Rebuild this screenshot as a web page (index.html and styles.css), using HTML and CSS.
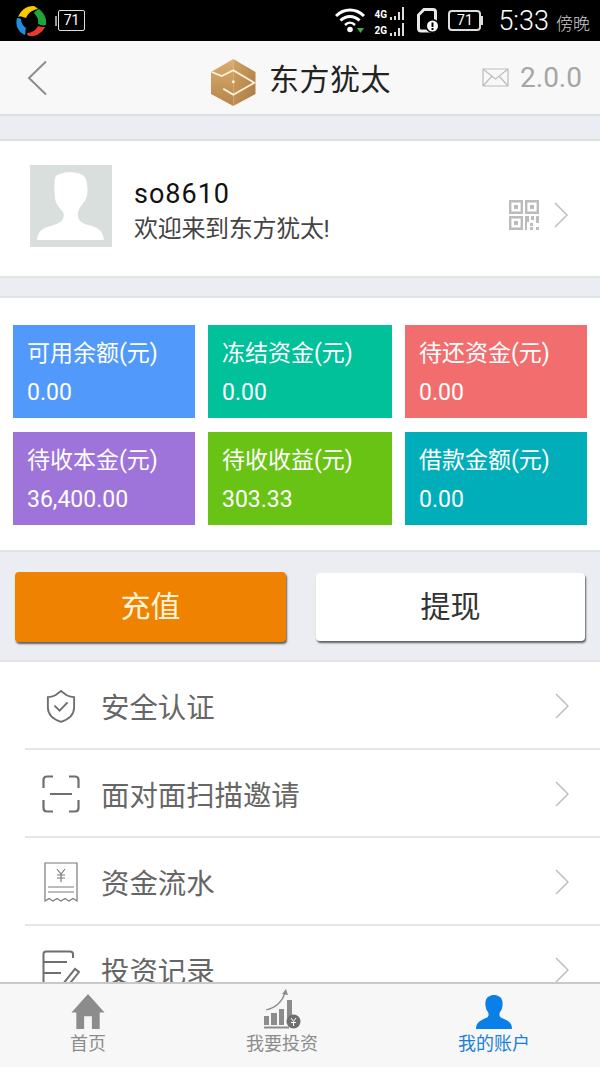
FILE: index.html
```html
<!DOCTYPE html>
<html lang="zh-CN">
<head>
	<meta charset="UTF-8">
	<title>东方犹太</title>
	<link rel="stylesheet" href="styles.css">
</head>
<body>
	<div class="statusbar">
		<div class="status-left">
			<svg width="32" height="32" viewBox="0 0 32 32">
				<path d="M3 12C6 5 11 1 18 1C20 1 22 3 23 4C17 5 13 8 11 13C8 12 5 11 3 12Z" fill="#f5c800"/>
				<path d="M24 4C29 8 32 13 31 20C28 21 26 20 23 19C24 15 22 11 19 8C20 6 22 5 24 4Z" fill="#1fa53c"/>
				<path d="M30 22C27 28 21 32 14 31C12 30 12 29 12 28C17 28 21 25 23 21C25 22 28 22 30 22Z" fill="#e8392f"/>
				<path d="M2 13C0 20 3 27 10 30C11 28 10 25 11 23C8 21 6 18 6 14C5 13 3 13 2 13Z" fill="#1f8fe0"/>
			</svg>
			<div class="mini-batt"><div class="mini-tip"></div><div class="mini-box">71</div></div>
		</div>
		<div class="status-right">
			<svg width="30" height="25" viewBox="0 0 30 25">
				<path d="M1 8C9 0 21 0 29 8" fill="none" stroke="#fff" stroke-width="3"/>
				<path d="M5.500 12.500C11 7 19 7 24.500 12.500" fill="none" stroke="#fff" stroke-width="3"/>
				<path d="M10 17C13 14 17 14 20 17" fill="none" stroke="#fff" stroke-width="2.500"/>
				<circle cx="15" cy="21.500" r="2.800" fill="#fff"/>
				<path d="M22 20H29L25.500 25Z" fill="#3fae49"/>
			</svg>
			<div class="signal">
				<div class="signal-row"><span>4G</span><i class="b1"></i><i class="b2"></i><i class="b3"></i><i class="b4"></i></div>
				<div class="signal-row"><span>2G</span><i class="b1"></i><i class="b2"></i><i class="b3"></i><i class="b4"></i></div>
			</div>
			<svg width="22" height="25" viewBox="0 0 22 25">
				<path d="M7 1.500H16Q18.500 1.500 18.500 4V20Q18.500 23 16 23H4Q1.500 23 1.500 20V7Z" fill="none" stroke="#e8e8e8" stroke-width="3"/>
				<circle cx="15.500" cy="18" r="7" fill="#000"/>
				<circle cx="15.500" cy="18" r="5.500" fill="#fff"/>
				<rect x="14.500" y="14.500" width="2" height="4.500" fill="#000"/>
				<rect x="14.500" y="20" width="2" height="2" fill="#000"/>
			</svg>
			<div class="batt"><div class="batt-box">71</div><div class="batt-tip"></div></div>
			<div class="clock">5:33<span>傍晚</span></div>
		</div>
	</div>

	<div class="topbar">
		<svg class="back" width="22" height="36" viewBox="0 0 22 36"><path d="M20 1.500L3 18L20 34.500" fill="none" stroke="#8d8d8d" stroke-width="2"/></svg>
		<div class="brand">
			<svg width="45" height="47" viewBox="0 0 45 47">
				<defs>
					<linearGradient id="gold" x1="0" y1="0" x2="0" y2="1">
						<stop offset="0" stop-color="#dcae70"/>
						<stop offset="1" stop-color="#b5854c"/>
					</linearGradient>
					<linearGradient id="goldDark" x1="0" y1="0" x2="1" y2="1">
						<stop offset="0" stop-color="#d2a262"/>
						<stop offset="1" stop-color="#a97a42"/>
					</linearGradient>
				</defs>
				<path d="M22.300 0L0 13V35L22.300 47Z" fill="url(#gold)"/>
				<path d="M22.300 0L44.500 13V35L22.300 47Z" fill="url(#goldDark)"/>
				<path d="M.7 13L10.700 17L22.300 11.300L43.300 23.700L22.300 35.700L12.300 29.700" fill="none" stroke="#fff3dc" stroke-width="1.800"/>
				<circle cx="22.300" cy="22.800" r="1.500" fill="#fff3dc"/>
			</svg>
			<div class="brand-name">东方犹太</div>
		</div>
		<div class="top-right">
			<svg width="27" height="19" viewBox="0 0 27 19"><path d="M1 1H26V18H1ZM1 1L13.500 11L26 1M1 18L10 8M26 18L17 8" fill="none" stroke="#bdbdbd" stroke-width="1.200"/></svg>
			<span>2.0.0</span>
		</div>
	</div>

	<div class="main">
		<div class="profile">
			<div class="avatar">
				<svg width="82" height="82" viewBox="0 0 82 82">
					<path d="M7 75C8 66 12 63 24 60C33 57 35 52 33 47C29 42 25 38 25 32C24 22 24 14 26 11C32 6 52 5 56 14C58 22 58 28 56 34C54 38 49 42 48 47C47 54 50 58 58 60C68 62 73 66 74 75Z" fill="#fff"/>
				</svg>
			</div>
			<div class="profile-text">
				<div class="username">so8610</div>
				<div class="welcome">欢迎来到东方犹太!</div>
			</div>
			<svg class="qr" width="30" height="30" viewBox="0 0 30 30">
				<path d="M1.200 1.200H12.800V12.800H1.200ZM17.200 1.200H28.800V12.800H17.200ZM1.200 17.200H12.800V28.800H1.200Z" fill="none" stroke="#bcbcbc" stroke-width="2.400"/>
				<path d="M5 5H9V9H5ZM21 5H25V9H21ZM5 21H9V25H5Z" fill="#bcbcbc"/>
				<path d="M16 16H20V22H18V30H16ZM22 16H25V20H22ZM27 16H30V23H27ZM21 23H24V26H21ZM21 27H24V30H21ZM27 27H30V30H27Z" fill="#bcbcbc"/>
			</svg>
			<svg class="chev" width="14" height="26" viewBox="0 0 14 26"><path d="M1 1L13 13L1 25" fill="none" stroke="#bdbdbd" stroke-width="1.500"/></svg>
		</div>

		<div class="tiles">
			<div class="tile t-blue"><div class="tile-label">可用余额(元)</div><div class="tile-value">0.00</div></div>
			<div class="tile t-green"><div class="tile-label">冻结资金(元)</div><div class="tile-value">0.00</div></div>
			<div class="tile t-red"><div class="tile-label">待还资金(元)</div><div class="tile-value">0.00</div></div>
			<div class="tile t-purple"><div class="tile-label">待收本金(元)</div><div class="tile-value">36,400.00</div></div>
			<div class="tile t-lime"><div class="tile-label">待收收益(元)</div><div class="tile-value">303.33</div></div>
			<div class="tile t-teal"><div class="tile-label">借款金额(元)</div><div class="tile-value">0.00</div></div>
		</div>

		<div class="actions">
			<div class="btn btn-orange">充值</div>
			<div class="btn btn-white">提现</div>
		</div>

		<div class="menu">
			<div class="menu-row">
				<div class="menu-icon">
					<svg width="30" height="35" viewBox="0 0 32 36">
						<path d="M16 1.500L22 6C25 7.500 28 8 30 8V19C30 27 23 32 16 34.500C9 32 2 27 2 19V8C4 8 7 7.500 10 6Z" fill="none" stroke="#6f6f6f" stroke-width="2"/>
						<path d="M9 17L14.500 22.500L23 13.500" fill="none" stroke="#6f6f6f" stroke-width="2"/>
					</svg>
				</div>
				<div class="menu-label">安全认证</div>
				<svg width="14" height="26" viewBox="0 0 14 26"><path d="M1 1L13 13L1 25" fill="none" stroke="#bdbdbd" stroke-width="1.500"/></svg>
			</div>
			<div class="menu-row">
				<div class="menu-icon">
					<svg width="38" height="38" viewBox="0 0 38 38">
						<path d="M11 1.500H5Q1.500 1.500 1.500 5V13M27 1.500H33Q36.500 1.500 36.500 5V13M1.500 25V33Q1.500 36.500 5 36.500H11M36.500 25V33Q36.500 36.500 33 36.500H27" fill="none" stroke="#6f6f6f" stroke-width="2.200"/>
						<path d="M8 19H30" stroke="#6f6f6f" stroke-width="2"/>
					</svg>
				</div>
				<div class="menu-label">面对面扫描邀请</div>
				<svg width="14" height="26" viewBox="0 0 14 26"><path d="M1 1L13 13L1 25" fill="none" stroke="#bdbdbd" stroke-width="1.500"/></svg>
			</div>
			<div class="menu-row">
				<div class="menu-icon">
					<svg width="34" height="40" viewBox="0 0 34 40">
						<path d="M1 39V1H33V39L29 36.500L25 39L21 36.500L17 39L13 36.500L9 39L5 36.500Z" fill="none" stroke="#7a7a7a" stroke-width="1.200"/>
						<path d="M4 25H30M4 30H30" stroke="#7a7a7a" stroke-width="1"/>
						<path d="M13 7L17 12L21 7M17 12V20M13 13H21M13 16H21" fill="none" stroke="#7a7a7a" stroke-width="1.200"/>
					</svg>
				</div>
				<div class="menu-label">资金流水</div>
				<svg width="14" height="26" viewBox="0 0 14 26"><path d="M1 1L13 13L1 25" fill="none" stroke="#bdbdbd" stroke-width="1.500"/></svg>
			</div>
			<div class="menu-row">
				<div class="menu-icon">
					<svg width="38" height="40" viewBox="0 0 38 40">
						<path d="M31 8V4Q31 1.500 28 1.500H4Q1.500 1.500 1.500 4V40" fill="none" stroke="#6f6f6f" stroke-width="2"/>
						<path d="M1.500 12H25M1.500 23H19" stroke="#6f6f6f" stroke-width="2"/>
						<path d="M21 34L33 19L37 22L25 37Z" fill="none" stroke="#6f6f6f" stroke-width="2"/>
					</svg>
				</div>
				<div class="menu-label">投资记录</div>
				<svg width="14" height="26" viewBox="0 0 14 26"><path d="M1 1L13 13L1 25" fill="none" stroke="#bdbdbd" stroke-width="1.500"/></svg>
			</div>
		</div>
	</div>

	<div class="tabbar">
		<div class="tab">
			<svg width="34" height="35" viewBox="0 0 34 36"><path d="M17 0L34 19H29V36H21V23H13V36H5V19H0Z" fill="#8c8c8c"/></svg>
			<div class="tab-label">首页</div>
		</div>
		<div class="tab">
			<svg width="38" height="41" viewBox="0 0 38 41">
				<path d="M3 22C12 20 19 14 22 5" fill="none" stroke="#8c8c8c" stroke-width="1.200"/>
				<path d="M19 6L23 1L25 7Z" fill="#8c8c8c"/>
				<path d="M1 28H6V37H1ZM8 25H14V37H8ZM16 21H21V37H16ZM24 12H29V30H24ZM1 38.500H26V40.500H1Z" fill="#8c8c8c"/>
				<circle cx="30.500" cy="33.500" r="7" fill="#6f6f6f"/>
				<path d="M28 30L30.500 33.500L33 30M30.500 33.500V38M28 34.500H33" fill="none" stroke="#fff" stroke-width="1"/>
			</svg>
			<div class="tab-label">我要投资</div>
		</div>
		<div class="tab tab-active">
			<svg width="36" height="34" viewBox="0 0 36 34"><path d="M0 34C0 28 3 26 10 23C13 22 13 19 12 17C10 15 9 10 9.500 7C10 2 14 0 18 0C22 0 26 2 26.500 7C27 10 26 15 24 17C23 19 23 22 26 23C33 26 36 28 36 34Z" fill="#0a7fe8"/></svg>
			<div class="tab-label">我的账户</div>
		</div>
	</div>
</body>
</html>
```

FILE: styles.css
```css
html, body {
	height: 100%;
}
body {
	margin: 0;
	display: flex;
	flex-direction: column;
	height: 1067px;
	overflow: hidden;
	background-color: #ebedf2;
	color: #333;
	font-family: Roboto, "Noto Sans CJK SC", sans-serif;
}

/* status bar */
.statusbar {
	flex: none;
	display: flex;
	justify-content: space-between;
	align-items: center;
	height: 41px;
	padding: 0 10px 0 15px;
	box-sizing: border-box;
	background-color: #000;
	color: #fff;
}
.status-left,
.status-right {
	display: flex;
	align-items: center;
}
.status-left {
	gap: 8px;
}
.status-right {
	gap: 9px;
}
.mini-batt {
	display: flex;
	align-items: center;
}
.mini-tip {
	width: 2px;
	height: 10px;
	margin-right: 1px;
	background-color: #999;
}
.mini-box {
	width: 25px;
	height: 19px;
	border: 1px solid #ddd;
	border-radius: 2px;
	font-size: 14px;
	line-height: 19px;
	text-align: center;
}
.signal {
	display: flex;
	flex-direction: column;
	width: 34px;
	gap: 2px;
}
.signal-row {
	display: flex;
	align-items: flex-end;
	gap: 2px;
	height: 14px;
}
.signal-row span {
	margin-right: 1px;
	font-size: 10px;
	font-weight: 700;
	line-height: 11px;
}
.signal-row i {
	display: block;
	width: 2px;
	background-color: #ddd;
}
.b1 { height: 3px; }
.b2 { height: 4px; }
.b3 { height: 8px; }
.b4 { height: 13px; }
.batt {
	display: flex;
	align-items: center;
}
.batt-box {
	width: 29px;
	height: 17px;
	border: 2px solid #ddd;
	border-radius: 4px;
	font-size: 14px;
	line-height: 17px;
	text-align: center;
}
.batt-tip {
	width: 2px;
	height: 9px;
	background-color: #ddd;
}
.clock {
	margin-left: 6px;
	font-size: 27px;
	font-weight: 300;
}
.clock span {
	margin-left: 7px;
	font-size: 17px;
	color: #ccc;
}

/* top bar */
.topbar {
	flex: none;
	display: flex;
	align-items: center;
	position: relative;
	height: 75px;
	padding: 0 18px 0 26px;
	box-sizing: border-box;
	background-color: #f8f8f8;
	border-bottom: 2px solid #dedfe3;
}
.brand {
	position: absolute;
	left: 211px;
	top: 16px;
	display: flex;
	align-items: center;
	gap: 13px;
}
.brand-name {
	padding-bottom: 4px;
	font-size: 30px;
	line-height: 46px;
	letter-spacing: .5px;
	color: #222;
}
.top-right {
	display: flex;
	align-items: center;
	gap: 11px;
	margin-left: auto;
	color: #a5a5a5;
	font-size: 28px;
}

/* scrolling part */
.main {
	flex: 1;
	min-height: 0;
	overflow: hidden;
}
.profile {
	display: flex;
	align-items: center;
	height: 139px;
	margin-top: 23px;
	padding: 0 32px 0 30px;
	box-sizing: border-box;
	background-color: #fff;
	border-top: 2px solid #dedfe3;
	border-bottom: 2px solid #e2e3e7;
}
.avatar {
	width: 82px;
	height: 82px;
	margin-bottom: 6px;
	background-color: #d9dfdc;
}
.avatar svg {
	display: block;
}
.profile-text {
	flex: 1;
	margin: 4px 0 0 22px;
}
.username {
	font-size: 27px;
	line-height: 36px;
	letter-spacing: 1px;
	color: #111;
}
.welcome {
	font-size: 24px;
	line-height: 34px;
	letter-spacing: -.3px;
	color: #444;
}
.qr,
.chev {
	margin-top: 12px;
}
.chev {
	margin-left: 15px;
}
.tiles {
	display: grid;
	grid-template-columns: 182px 184px 182px;
	gap: 14px 13px;
	margin-top: 18px;
	padding: 27px 13px 25px;
	background-color: #fff;
	border-top: 2px solid #e2e3e7;
	border-bottom: 2px solid #e2e3e7;
}
.tile {
	height: 93px;
	padding: 13px 13px 0 14px;
	box-sizing: border-box;
	color: #fff;
}
.tile-label {
	font-size: 23px;
	line-height: 32px;
}
.tile-value {
	margin-top: 8px;
	font-size: 23px;
	line-height: 30px;
}
.t-blue { background-color: #5199fb; }
.t-green { background-color: #00c199; }
.t-red { background-color: #f26e6e; }
.t-purple { background-color: #9e73da; }
.t-lime { background-color: #69c314; }
.t-teal { background-color: #00aeb9; }

.actions {
	display: flex;
	justify-content: space-between;
	align-items: center;
	padding: 20px 15px 18px;
}
.btn {
	border-radius: 4px;
	box-shadow: 1px 2px 2px rgba(0,0,0,.6);
	font-size: 30px;
	text-align: center;
}
.btn-orange {
	width: 271px;
	height: 70px;
	line-height: 70px;
	background-color: #ef8200;
	color: #fff3d8;
}
.btn-white {
	width: 269px;
	height: 68px;
	line-height: 68px;
	background-color: #fff;
	color: #333;
}

.menu {
	padding-left: 25px;
	background-color: #fff;
	border-top: 2px solid #e2e3e7;
}
.menu-row {
	display: flex;
	align-items: center;
	height: 88px;
	padding: 2px 31px 0 0;
	box-sizing: border-box;
	border-bottom: 2px solid #e6e6e6;
}
.menu-icon {
	display: flex;
	justify-content: center;
	width: 71px;
	margin-right: 5px;
}
.menu-label {
	flex: 1;
	margin-bottom: 2px;
	font-size: 28.4px;
	color: #666;
}

/* bottom tabs */
.tabbar {
	flex: none;
	display: grid;
	grid-template-columns: 176px 212px 212px;
	height: 85px;
	box-sizing: border-box;
	background-color: #f7f7f7;
	border-top: 2px solid #c9c9c9;
}
.tab {
	display: flex;
	flex-direction: column;
	align-items: center;
	justify-content: flex-end;
	padding-bottom: 11px;
	color: #8c8c8c;
}
.tab svg {
	margin-bottom: 3px;
}
.tab-label {
	font-size: 18px;
	line-height: 24px;
}
.tab-active {
	color: #1a7fdc;
}
```
